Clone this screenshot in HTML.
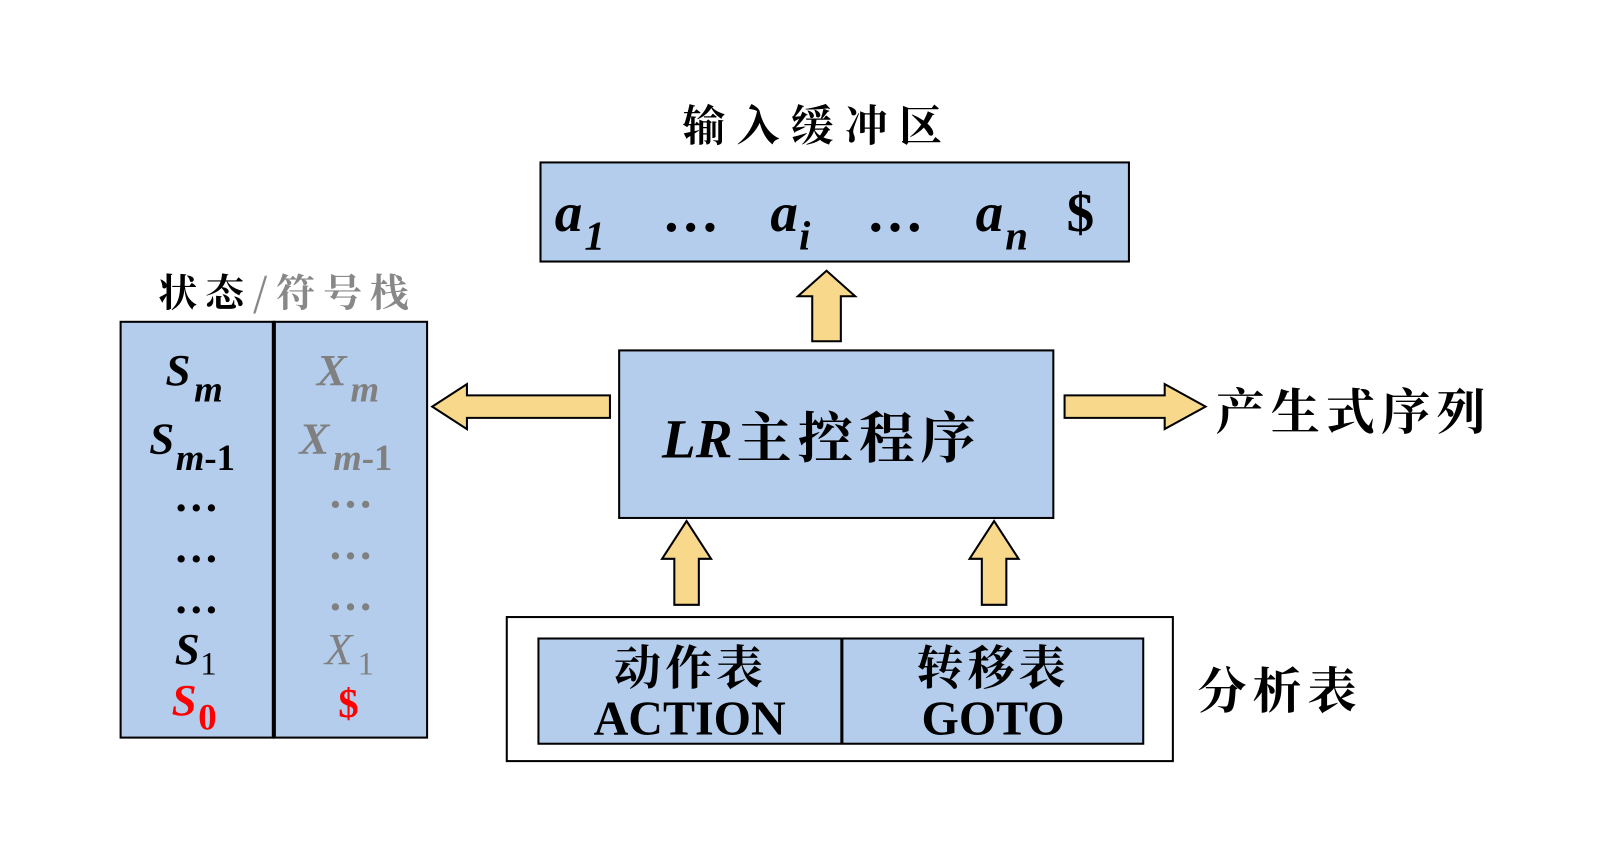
<!DOCTYPE html>
<html><head><meta charset="utf-8"><style>
html,body{margin:0;padding:0;background:#fff;}
svg{display:block}
.cn{font-family:"Noto Serif CJK SC","WenQuanYi Zen Hei",serif;font-weight:700;}
.t{font-family:"Liberation Serif",serif;font-weight:700;}
</style></head><body>
<svg width="1602" height="851" viewBox="0 0 1568 833" xmlns="http://www.w3.org/2000/svg">
<rect width="1568" height="833" fill="#fff"/>
<!-- input buffer -->
<text class="cn" x="668" y="138" font-size="42" letter-spacing="11">输入缓冲区</text>
<rect x="529" y="159" width="576" height="97" fill="#b4cdec" stroke="#000" stroke-width="2"/>
<g class="t" font-style="italic">
<text x="543" y="226" font-size="54">a</text><text x="572" y="244" font-size="40">1</text>
<text x="754" y="226" font-size="54">a</text><text x="782" y="244" font-size="40">i</text>
<text x="955" y="226" font-size="54">a</text><text x="984" y="244" font-size="40">n</text>
</g>
<g class="t" font-size="56"><text x="648" y="226">…</text><text x="848" y="226">…</text></g>
<text class="t" x="1044" y="226" font-size="54">$</text>
<!-- up arrow to buffer -->
<path d="M795,334 V290 H781 L809,265 L837,290 H823 V334 Z" fill="#f8d98c" stroke="#000" stroke-width="2"/>
<!-- main box -->
<rect x="606" y="343" width="425" height="164" fill="#b4cdec" stroke="#000" stroke-width="2"/>
<text x="648" y="448" font-size="54"><tspan class="t" font-style="italic">LR</tspan><tspan class="cn" font-size="54" dx="4" letter-spacing="6">主控程序</tspan></text>
<!-- left arrow -->
<path d="M597,387 H457 V376 L423,398 L457,420 V409 H597 Z" fill="#f8d98c" stroke="#000" stroke-width="2"/>
<!-- right arrow -->
<path d="M1042,387 H1140 V376 L1180,398 L1140,420 V409 H1042 Z" fill="#f8d98c" stroke="#000" stroke-width="2"/>
<text class="cn" x="1190" y="420" font-size="48" letter-spacing="6">产生式序列</text>
<!-- stack -->
<text x="155" y="300" font-size="38" class="cn" letter-spacing="8">状态<tspan fill="#888">/符号栈</tspan></text>
<rect x="118" y="315" width="150" height="407" fill="#b4cdec" stroke="#000" stroke-width="2"/>
<rect x="268" y="315" width="150" height="407" fill="#b4cdec" stroke="#000" stroke-width="2"/>
<line x1="268" y1="315" x2="268" y2="722" stroke="#000" stroke-width="4"/>
<g class="t" font-style="italic" font-size="44">
<text x="162" y="377">S</text><text x="190" y="393" font-size="36">m</text>
<text x="146" y="444">S</text><text x="172" y="460" font-size="36">m<tspan font-style="normal">-1</tspan></text>
<text x="171" y="650">S</text><text x="196" y="660" font-size="32" font-style="normal" font-weight="400">1</text>
<text x="168" y="700" fill="#f00">S</text><text x="194" y="714" font-size="36" font-style="normal" fill="#f00">0</text>
</g>
<g class="t" font-size="44"><text x="170" y="500">…</text><text x="170" y="550">…</text><text x="170" y="600">…</text></g>
<g class="t" font-style="italic" font-size="44" fill="#808080">
<text x="310" y="377">X</text><text x="343" y="393" font-size="36">m</text>
<text x="293" y="444">X</text><text x="326" y="460" font-size="36">m<tspan font-style="normal">-1</tspan></text>
<text x="318" y="650" font-weight="400">X</text><text x="350" y="660" font-size="32" font-style="normal" font-weight="400">1</text>
</g>
<g class="t" font-size="44" fill="#808080"><text x="321" y="497">…</text><text x="321" y="547">…</text><text x="321" y="597">…</text></g>
<text class="t" x="331" y="702" font-size="40" fill="#f00">$</text>
<!-- bottom arrows -->
<path d="M660,592 V547 H648 L672,510 L696,547 H684 V592 Z" fill="#f8d98c" stroke="#000" stroke-width="2"/>
<path d="M961,592 V547 H949 L973,510 L997,547 H985 V592 Z" fill="#f8d98c" stroke="#000" stroke-width="2"/>
<!-- table -->
<rect x="496" y="604" width="652" height="141" fill="#fff" stroke="#000" stroke-width="2"/>
<rect x="527" y="625" width="592" height="103" fill="#b4cdec" stroke="#000" stroke-width="2"/>
<line x1="824" y1="625" x2="824" y2="728" stroke="#000" stroke-width="3"/>
<text class="cn" x="676" y="670" font-size="46" text-anchor="middle" letter-spacing="4">动作表</text>
<text class="cn" x="972" y="670" font-size="46" text-anchor="middle" letter-spacing="4">转移表</text>
<text class="t" x="581" y="719" font-size="48" textLength="188" lengthAdjust="spacingAndGlyphs">ACTION</text>
<text class="t" x="902" y="719" font-size="48" textLength="140" lengthAdjust="spacingAndGlyphs">GOTO</text>
<text class="cn" x="1172" y="693" font-size="48" letter-spacing="6">分析表</text>
</svg>
</body></html>
